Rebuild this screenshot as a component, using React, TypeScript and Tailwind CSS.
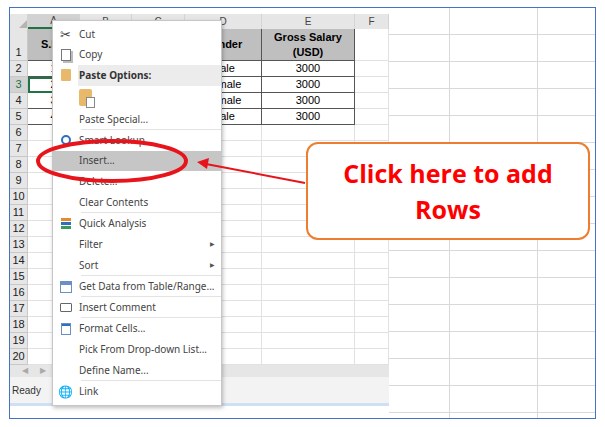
import React from "react";

const cols = [18, 52, 52, 53, 77, 93, 34];
const letters = ["", "A", "B", "C", "D", "E", "F"];
const data: string[][] = [
  ["S.No", "Name", "Dept", "Gender", "Gross Salary\n(USD)"],
  ["1", "John", "HR", "Male", "3000"],
  ["2", "Mary", "IT", "Female", "3000"],
  ["3", "Anna", "IT", "Female", "3000"],
  ["4", "Mark", "HR", "Male", "3000"],
];

function Sheet() {
  const rows = Array.from({ length: 20 }, (_, i) => i + 1);
  return (
    <div className="flex flex-col w-[379px] bg-white" style={{ fontFamily: "'Liberation Sans', Arial, sans-serif" }}>
      <div className="h-[6px]" />
      <div className="flex h-[15px] bg-[#e6e6e6] text-[10px] text-[#444]">
        {cols.map((w, i) => (
          <div key={i} style={{ width: w }} className={`flex items-center justify-center border-r border-[#d4d4d4] ${i === 1 ? "bg-[#d2d2d2] border-b-2 border-b-[#217346]" : ""}`}>
            {i === 0 ? <div className="w-0 h-0 border-l-[8px] border-l-transparent border-b-[8px] border-b-[#b4b4b4] ml-2 mt-1" /> : letters[i]}
          </div>
        ))}
      </div>
      {rows.map((r) => {
        const h = r === 1 ? 32 : 16;
        return (
          <div key={r} className="flex" style={{ height: h }}>
            {cols.map((w, i) => {
              if (i === 0)
                return (
                  <div key={i} style={{ width: w }} className={`flex items-end justify-center text-[11px] border-r border-b border-[#c8c8c8] ${r === 3 ? "bg-[#d2d2d2] text-[#217346]" : "bg-[#e6e6e6] text-[#222]"}`}>
                    {r}
                  </div>
                );
              const inTable = r <= 5 && i <= 5;
              const txt = inTable ? data[r - 1][i - 1] : "";
              const head = r === 1 && inTable;
              return (
                <div
                  key={i}
                  style={{ width: w }}
                  className={`flex items-center justify-center text-center whitespace-pre-line leading-[15px] text-[11px] ${
                    inTable ? "border-r border-b border-[#555]" : "border-r border-b border-[#e1e1e1]"
                  } ${head ? "bg-[#bfbfbf] font-bold" : ""} ${r === 3 && i === 1 ? "outline outline-2 outline-[#217346] -outline-offset-2" : ""}`}
                >
                  {txt}
                </div>
              );
            })}
          </div>
        );
      })}
      <div className="h-[12px] bg-[#e6e6e6] flex items-center gap-3 pl-[12px] text-[8px] text-[#aaa]">
        <span>◀</span>
        <span>▶</span>
      </div>
      <div className="h-[26px] bg-[#f3f3f3] flex items-center pl-[2px] text-[10px] text-[#333]">Ready</div>
      <div className="h-[3px] bg-[#cfe0f5]" />
    </div>
  );
}

const items: { t: string; icon?: React.ReactNode; sep?: boolean; hl?: boolean; header?: boolean; arrow?: boolean; big?: boolean }[] = [
  { t: "Cut", icon: <span className="text-[13px] text-[#444]">✂</span> },
  { t: "Copy", icon: <span className="block w-[10px] h-[12px] border border-[#777] bg-white shadow-[2px_2px_0_#bbb]" /> },
  { t: "Paste Options:", header: true, icon: <span className="block w-[10px] h-[12px] bg-[#e8b96b] rounded-[1px]" /> },
  { t: "", big: true },
  { t: "Paste Special...", sep: true },
  { t: "Smart Lookup", icon: <span className="block w-[10px] h-[10px] rounded-full border-2 border-[#2e6fbf]" /> },
  { t: "Insert...", hl: true },
  { t: "Delete..." },
  { t: "Clear Contents", sep: true },
  { t: "Quick Analysis", icon: <span className="flex flex-col gap-[1px]"><span className="block w-[10px] h-[3px] bg-[#e58a2e]" /><span className="block w-[10px] h-[3px] bg-[#2e6fbf]" /><span className="block w-[10px] h-[3px] bg-[#3a9a5a]" /></span> },
  { t: "Filter", arrow: true },
  { t: "Sort", arrow: true, sep: true },
  { t: "Get Data from Table/Range...", sep: true, icon: <span className="block w-[12px] h-[12px] border border-[#6a8fc6] bg-[linear-gradient(#6a8fc6_0_3px,transparent_3px)]" /> },
  { t: "Insert Comment", sep: true, icon: <span className="block w-[12px] h-[9px] border border-[#666] rounded-[1px]" /> },
  { t: "Format Cells...", icon: <span className="block w-[10px] h-[12px] border border-[#6a8fc6] bg-[linear-gradient(#2e6fbf_0_2px,transparent_2px)]" /> },
  { t: "Pick From Drop-down List..." },
  { t: "Define Name...", sep: true },
  { t: "Link", icon: <span className="text-[12px] text-[#2e6fbf]">🌐</span> },
];

function Menu() {
  return (
    <div className="absolute left-[52px] top-[20px] w-[170px] bg-white border border-[#c6c6c6] shadow-[1px_2px_4px_rgba(0,0,0,0.25)] py-[3px]" style={{ fontFamily: "'Noto Sans', sans-serif" }}>
      {items.map((it, i) => (
        <div key={i} className={`relative flex items-center ${it.big ? "h-[24px]" : i > 6 ? "h-[21px]" : "h-[20.5px]"} ${it.hl ? "bg-[#c6c6c6]" : ""}`}>
          <div className="w-[25px] flex items-center justify-center">{it.icon}</div>
          {it.big ? (
            <div className="flex items-center pl-[1px]">
              <span className="block w-[13px] h-[17px] bg-[#e8b96b] rounded-[2px] relative">
                <span className="absolute right-[-3px] bottom-[-2px] w-[9px] h-[11px] bg-white border border-[#888]" />
              </span>
            </div>
          ) : (
            <div className={`flex-1 h-full flex items-center pl-[1px] text-[10px] ${it.header ? "bg-[#ececec] font-bold text-[#333]" : "text-[#444]"}`}>{it.t}</div>
          )}
          {it.arrow && <span className="absolute right-[6px] text-[6px] text-[#555]">▶</span>}
          {it.sep && <div className="absolute left-[28px] right-0 bottom-0 h-px bg-[#e3e3e3]" />}
        </div>
      ))}
    </div>
  );
}

export default function App() {
  return (
    <div className="w-[605px] h-[427px] bg-white relative overflow-hidden">
      <div className="absolute left-[9px] top-[7px] w-[587px] h-[412px] border border-[#4472c4] flex bg-white">
        <Sheet />
        <div className="flex-1 bg-[repeating-linear-gradient(to_bottom,transparent_0_26px,#d9d9d9_26px_27px)] relative">
          <div className="absolute left-[60px] top-0 bottom-0 w-px bg-[#d9d9d9]" />
          <div className="absolute left-[148px] top-0 bottom-0 w-px bg-[#d9d9d9]" />
        </div>
      </div>
      <Menu />
      <svg className="absolute left-0 top-0" width="605" height="427">
        <ellipse cx="112" cy="161" rx="74" ry="20" fill="none" stroke="#e8141c" strokeWidth="4" />
        <line x1="305" y1="183" x2="206" y2="164" stroke="#e8141c" strokeWidth="2" />
        <polygon points="197,162 209,158 207,169" fill="#e8141c" />
      </svg>
      <div className="absolute left-[306px] top-[142px] w-[284px] h-[98px] rounded-[12px] border-2 border-[#ed7d31] bg-white flex items-center justify-center text-center text-[#ff0000] font-bold text-[25px] leading-[36px]" style={{ fontFamily: "'Open Sans', sans-serif" }}>
        Click here to add
        <br />
        Rows
      </div>
    </div>
  );
}
